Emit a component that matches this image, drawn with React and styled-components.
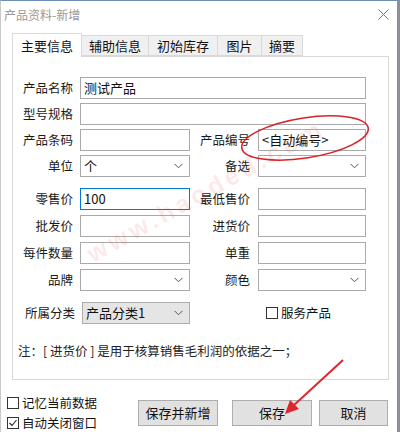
import React from "react";
import styled, { createGlobalStyle } from "styled-components";

const Global = createGlobalStyle`
  html, body { margin: 0; padding: 0; background: #ffffff; }
  body { font-family: "Noto Sans CJK SC", "Noto Sans", sans-serif; color: #1a1a1a; }
  * { box-sizing: border-box; }
`;

const Win = styled.div`
  position: relative;
  width: 400px;
  height: 432px;
  background: #ffffff;
  border-top: 1px solid #6c8fb3;
  border-left: 1px solid #c9c9c9;
  border-right: 3px solid #8a8f99;
  display: flex;
  flex-direction: column;
  overflow: hidden;
`;

const TitleBar = styled.div`
  height: 31px;
  display: flex;
  align-items: center;
  justify-content: space-between;
  padding: 0 8px 4px 3px;
  font-size: 12px;
  color: #9a9a9a;
`;

const Close = styled.svg`
  width: 11px;
  height: 11px;
`;

const Tabs = styled.div`
  display: flex;
  align-items: flex-end;
  height: 24px;
  margin-left: 11px;
  position: relative;
  z-index: 1;
`;

const Tab = styled.div`
  height: ${(p) => (p.$active ? "24px" : "21px")};
  width: ${(p) => p.$w}px;
  margin-bottom: ${(p) => (p.$active ? "-1px" : "0")};
  background: ${(p) => (p.$active ? "#ffffff" : "#f0f0f0")};
  border: 1px solid #d9d9d9;
  border-bottom: ${(p) => (p.$active ? "none" : "1px solid #d9d9d9")};
  border-left: ${(p) => (p.$first || p.$active ? "1px solid #d9d9d9" : "none")};
  display: flex;
  align-items: center;
  justify-content: center;
  font-size: 13px;
  color: #111;
  padding-top: ${(p) => (p.$active ? "0" : "1px")};
`;

const Panel = styled.div`
  margin-left: 11px;
  width: 377px;
  height: 327px;
  border: 1px solid #d9d9d9;
  background: #ffffff;
  display: flex;
  flex-direction: column;
  padding-top: 20px;
`;

const Grid = styled.div`
  display: grid;
  grid-template-columns: 67px 110px 68px 108px;
  grid-auto-rows: 22px;
  row-gap: ${(p) => p.$gap}px;
  margin-top: ${(p) => p.$mt || 0}px;
`;

const Label = styled.div`
  font-size: 12.5px;
  color: #1a1a1a;
  display: flex;
  align-items: center;
  justify-content: flex-end;
  padding-right: ${(p) => (p.$second ? 8 : 7)}px;
  white-space: nowrap;
`;

const Field = styled.div`
  grid-column: ${(p) => (p.$span ? "span 3" : "auto")};
  border: 1px solid;
  background: ${(p) => (p.$gray ? "#e5e5e5" : "#ffffff")};
  border-color: ${(p) => (p.$focus ? "#0078d7" : p.$gray ? "#adadad" : "#a9a9a9")};
  display: flex;
  align-items: center;
  justify-content: space-between;
  padding: 0 6px 0 3px;
  font-size: 13px;
  color: #111;
  white-space: nowrap;
`;

const Chevron = () => (
  <svg width="9" height="6" viewBox="0 0 9 6">
    <polyline points="0.5,0.8 4.5,4.8 8.5,0.8" fill="none" stroke="#555" strokeWidth="1" />
  </svg>
);

const Row9 = styled.div`
  display: grid;
  grid-template-columns: 69px 108px 76px auto;
  height: 22px;
  margin-top: 11px;
`;

const CheckLine = styled.label`
  display: flex;
  align-items: center;
  gap: 3px;
  font-size: 12.5px;
  color: #111;
  white-space: nowrap;
`;

const Box = styled.span`
  width: 12px;
  height: 12px;
  border: 1px solid #333;
  background: #fff;
  display: inline-flex;
  align-items: center;
  justify-content: center;
`;

const Note = styled.div`
  margin: 17px 0 0 5px;
  font-size: 12.5px;
  color: #222;
  white-space: nowrap;
`;

const Footer = styled.div`
  display: flex;
  align-items: center;
  padding: 13px 0 0 6px;
`;

const Checks = styled.div`
  display: flex;
  flex-direction: column;
  gap: 1px;
  width: 131px;
`;

const Button = styled.button`
  width: ${(p) => p.$w}px;
  height: 26px;
  margin-left: ${(p) => p.$ml}px;
  background: #e1e1e1;
  border: 1px solid #adadad;
  font-family: inherit;
  font-size: 13px;
  color: #111;
  padding: 0;
`;

const Overlay = styled.svg`
  position: absolute;
  left: 0;
  top: 0;
  pointer-events: none;
`;

const Check = ({ checked }) => (
  <Box>
    {checked && (
      <svg width="10" height="10" viewBox="0 0 10 10">
        <polyline points="1.5,5 4,7.5 8.5,2" fill="none" stroke="#222" strokeWidth="1.1" />
      </svg>
    )}
  </Box>
);

export default function App() {
  return (
    <>
      <Global />
      <Win>
        <TitleBar>
          <span>产品资料-新增</span>
          <Close viewBox="0 0 11 11">
            <path d="M0.5 0.5 L10.5 10.5 M10.5 0.5 L0.5 10.5" stroke="#777" strokeWidth="1" />
          </Close>
        </TitleBar>
        <Tabs>
          <Tab $active $first $w={70}>主要信息</Tab>
          <Tab $w={67}>辅助信息</Tab>
          <Tab $w={69}>初始库存</Tab>
          <Tab $w={44}>图片</Tab>
          <Tab $w={41}>摘要</Tab>
        </Tabs>
        <Panel>
          <Grid $gap={4}>
            <Label>产品名称</Label>
            <Field $span>测试产品</Field>
            <Label>型号规格</Label>
            <Field $span />
            <Label>产品条码</Label>
            <Field />
            <Label $second>产品编号</Label>
            <Field>&lt;自动编号&gt;</Field>
            <Label>单位</Label>
            <Field>个<Chevron /></Field>
            <Label $second>备选</Label>
            <Field><span /><Chevron /></Field>
          </Grid>
          <Grid $gap={5} $mt={11}>
            <Label>零售价</Label>
            <Field $focus>100</Field>
            <Label $second>最低售价</Label>
            <Field />
            <Label>批发价</Label>
            <Field />
            <Label $second>进货价</Label>
            <Field />
            <Label>每件数量</Label>
            <Field />
            <Label $second>单重</Label>
            <Field />
            <Label>品牌</Label>
            <Field><span /><Chevron /></Field>
            <Label $second>颜色</Label>
            <Field><span /><Chevron /></Field>
          </Grid>
          <Row9>
            <Label>所属分类</Label>
            <Field $gray>产品分类1<Chevron /></Field>
            <span />
            <CheckLine><Check />服务产品</CheckLine>
          </Row9>
          <Note>注：[ 进货价 ] 是用于核算销售毛利润的依据之一；</Note>
        </Panel>
        <Footer>
          <Checks>
            <CheckLine><Check />记忆当前数据</CheckLine>
            <CheckLine><Check checked />自动关闭窗口</CheckLine>
          </Checks>
          <Button $w={80} $ml={0}>保存并新增</Button>
          <Button $w={80} $ml={14}>保存</Button>
          <Button $w={69} $ml={7}>取消</Button>
        </Footer>
        <Overlay width="400" height="432" viewBox="0 0 400 432">
          <text x="92" y="262" fill="#e84a4a" fillOpacity="0.12" fontSize="25" fontWeight="bold" letterSpacing="4" fontFamily="Liberation Sans, sans-serif" transform="rotate(-29 92 262)">www.haoded.com</text>
          <ellipse cx="304" cy="137" rx="64" ry="20" fill="none" stroke="#d8232a" strokeWidth="1.6" transform="rotate(-9 304 137)" />
          <line x1="342" y1="359" x2="292" y2="405" stroke="#e0262c" strokeWidth="2" />
          <polygon points="284,413 289,399 298,408" fill="#e0262c" />
        </Overlay>
      </Win>
    </>
  );
}
